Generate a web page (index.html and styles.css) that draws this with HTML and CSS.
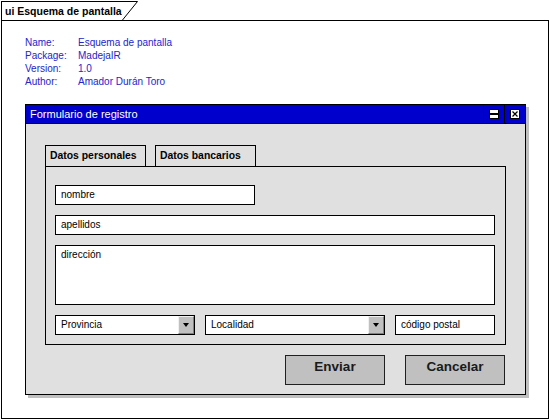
FILE: index.html
```html
<!DOCTYPE html>
<html lang="es">
<head>
<meta charset="utf-8">
<title>Esquema de pantalla</title>
<link rel="stylesheet" href="styles.css">
</head>
<body>
<div class="canvas">
  <div class="tab">
    <span class="tab-label">ui Esquema de pantalla</span>
    <svg class="tab-corner" width="16" height="19" viewBox="0 0 16 19"><path d="M0 0.5 H15.5 L0.5 19" fill="none" stroke="#000" stroke-width="1"/></svg>
  </div>
  <div class="frame">
    <div class="info">
      <span>Name:</span><span>Esquema de pantalla</span>
      <span>Package:</span><span>MadejaIR</span>
      <span>Version:</span><span>1.0</span>
      <span>Author:</span><span>Amador Durán Toro</span>
    </div>
    <div class="window">
      <div class="titlebar">
        <span class="title">Formulario de registro</span>
        <div class="tb-btn">
          <svg width="10" height="10" viewBox="0 0 10 10"><rect x="0.5" y="0.5" width="9" height="9" fill="#fff" stroke="#000"/><rect x="1" y="4" width="8" height="2" fill="#000"/></svg>
        </div>
        <div class="tb-btn">
          <svg width="10" height="10" viewBox="0 0 10 10"><rect x="0.5" y="0.5" width="9" height="9" fill="#fff" stroke="#000"/><path d="M2.5 2.5 L7.5 7.5 M7.5 2.5 L2.5 7.5" stroke="#000" stroke-width="1.2"/></svg>
        </div>
      </div>
      <div class="wbody">
        <div class="tabs">
          <div class="wtab">Datos personales</div>
          <div class="wtab">Datos bancarios</div>
        </div>
        <div class="panel">
          <div class="field w200">nombre</div>
          <div class="field">apellidos</div>
          <div class="field area">dirección</div>
          <div class="row">
            <div class="field combo w140"><span>Provincia</span><span class="drop"></span></div>
            <div class="field combo w180"><span>Localidad</span><span class="drop"></span></div>
            <div class="field w100">código postal</div>
          </div>
        </div>
        <div class="actions">
          <div class="btn">Enviar</div>
          <div class="btn">Cancelar</div>
        </div>
      </div>
    </div>
  </div>
</div>
</body>
</html>
```
FILE: styles.css
```css
* { box-sizing: border-box; }
html, body { margin: 0; padding: 0; background: #fff; }
body { font-family: "Liberation Sans", Arial, sans-serif; color: #000; }
.canvas { width: 550px; height: 420px; }

.tab { display: flex; height: 19px; margin: 1px 0 0 1px; }
.tab-label {
  width: 121px; border-top: 1px solid #000; border-left: 1px solid #000;
  font-weight: bold; font-size: 10.5px; line-height: 18px; padding-left: 3px;
  white-space: nowrap;
}
.tab-corner { display: block; flex: none; }

.frame { margin-left: 1px; width: 548px; height: 399px; border: 1px solid #000; }

.info {
  display: grid; grid-template-columns: 53px auto; margin: 15px 0 0 23px;
  font-size: 10px; line-height: 13px; color: #2424cc; width: 200px;
}

.window {
  margin: 16px 0 0 23px; width: 501px; height: 291px; border: 1px solid #000;
  box-shadow: 3px 3px 0 #c0c0c0; display: flex; flex-direction: column;
}
.titlebar {
  height: 19px; background: #0000cc; border-bottom: 1px solid #000;
  display: flex; align-items: stretch;
}
.title { flex: 1; color: #fff; font-size: 11px; line-height: 18px; padding-left: 4px; }
.tb-btn {
  width: 21px; border-left: 1px solid #000; display: flex; align-items: center; justify-content: center;
}
.tb-btn svg { display: block; }

.wbody { flex: 1; background: #e0e0e0; padding: 21px 19px 0 19px; }
.tabs { display: flex; gap: 9px; }
.wtab {
  width: 101px; height: 21px; border: 1px solid #000; border-bottom: none;
  font-weight: bold; font-size: 10.4px; line-height: 19px; padding-left: 4px; white-space: nowrap;
}
.panel {
  width: 461px; height: 179px; border: 1px solid #000;
  padding: 18px 10px 0 9px; display: flex; flex-direction: column; gap: 10px;
}
.field {
  height: 20px; background: #fff; border: 1px solid #000;
  font-size: 10px; line-height: 18px; padding-left: 5px; white-space: nowrap;
}
.w200 { width: 200px; }
.w140 { width: 140px; }
.w180 { width: 180px; }
.w100 { width: 100px; }
.area { height: 60px; line-height: 12px; padding-top: 3px; }
.row { display: flex; gap: 10px; }
.combo { display: flex; justify-content: space-between; padding-right: 0; }
.drop {
  width: 16px; height: 18px; background: #c0c0c0;
  border: 1px solid; border-color: #f0f0f0 #808080 #808080 #f0f0f0;
  display: flex; align-items: center; justify-content: center;
}
.drop::after {
  content: ""; width: 0; height: 0;
  border-left: 3.5px solid transparent; border-right: 3.5px solid transparent; border-top: 4px solid #000;
}
.actions { display: flex; justify-content: flex-end; gap: 20px; margin-top: 10px; padding-right: 1px; }
.btn {
  width: 100px; height: 30px; background: #c0c0c0; border: 1px solid #202020;
  font-weight: bold; font-size: 13.5px; color: #1a1a1a; text-align: center;
  line-height: 22px;
}
```
